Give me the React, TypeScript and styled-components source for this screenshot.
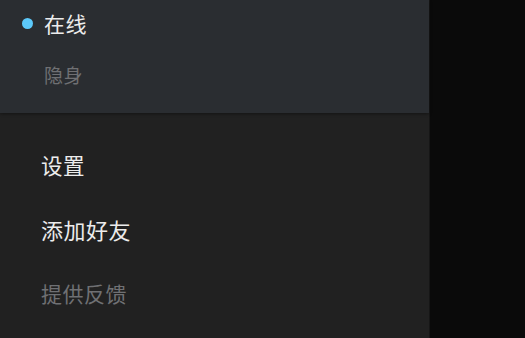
import React from "react";
import styled, { createGlobalStyle } from "styled-components";

const Global = createGlobalStyle`
  html, body { margin: 0; padding: 0; background: #0a0a0a; }
  body { font-family: "Noto Sans CJK SC", "Noto Sans", sans-serif; }
`;

const Screen = styled.div`
  display: flex;
  width: 525px;
  height: 338px;
  overflow: hidden;
  background: #0a0a0a;
`;

const Drawer = styled.div`
  width: 429px;
  display: flex;
  flex-direction: column;
  background: #212121;
  border-right: 1px solid #161616;
`;

const StatusSection = styled.div`
  height: 113px;
  background: #2a2d31;
  box-shadow: 0 1px 3px rgba(0, 0, 0, 0.4);
  display: flex;
  flex-direction: column;
  padding-left: 22px;
  position: relative;
  z-index: 1;
`;

const StatusRow = styled.div<{ $h: number }>`
  height: ${(p) => p.$h}px;
  display: flex;
  align-items: center;
`;

const Dot = styled.span<{ $on: boolean }>`
  width: 11px;
  height: 11px;
  border-radius: 50%;
  background: ${(p) => (p.$on ? "#5cc9fa" : "transparent")};
  margin-right: 11px;
  flex: none;
`;

const Label = styled.span<{ $muted?: boolean; $size?: number }>`
  font-size: ${(p) => p.$size ?? 21}px;
  line-height: 1;
  color: ${(p) => (p.$muted ? "#6f7073" : "#ececec")};
  letter-spacing: 0.5px;
`;

const Menu = styled.div`
  display: flex;
  flex-direction: column;
  padding-top: 20px;
  padding-left: 41px;
`;

const MenuItem = styled.div`
  height: 64px;
  display: flex;
  align-items: center;
`;

export default function App() {
  return (
    <>
      <Global />
      <Screen>
        <Drawer>
          <StatusSection>
            <StatusRow $h={46}>
              <Dot $on />
              <Label>在线</Label>
            </StatusRow>
            <StatusRow $h={56}>
              <Dot $on={false} />
              <Label $muted $size={19}>隐身</Label>
            </StatusRow>
          </StatusSection>
          <Menu>
            <MenuItem>
              <Label $size={21.5}>设置</Label>
            </MenuItem>
            <MenuItem>
              <Label $size={22}>添加好友</Label>
            </MenuItem>
            <MenuItem>
              <Label $muted $size={21}>提供反馈</Label>
            </MenuItem>
          </Menu>
        </Drawer>
      </Screen>
    </>
  );
}
